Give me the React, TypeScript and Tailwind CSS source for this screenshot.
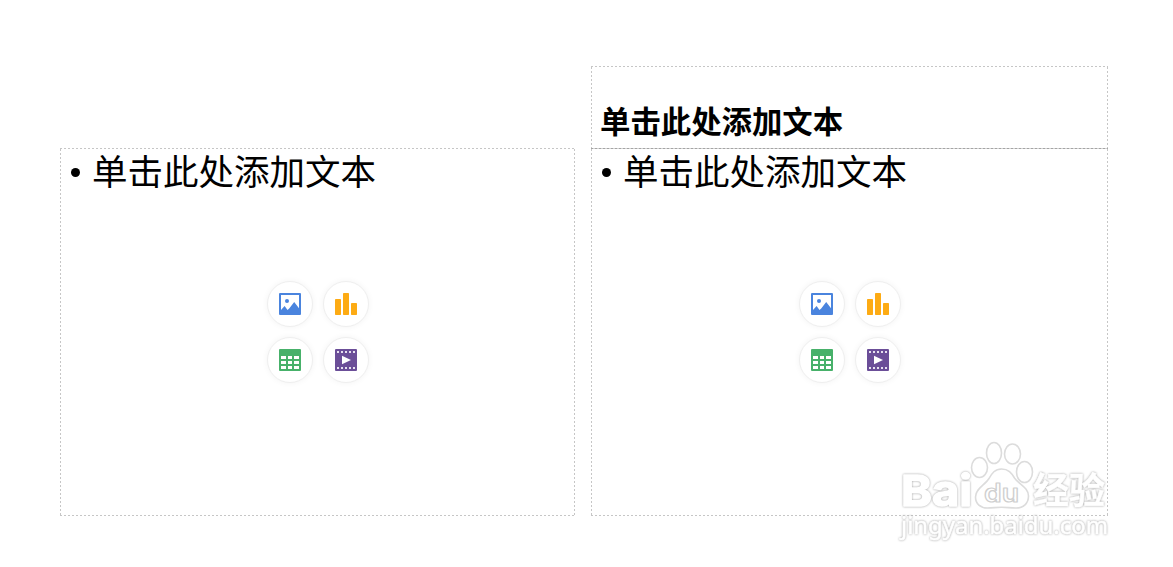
import React from "react";

const DASH_X = "h-px w-full shrink-0 bg-[repeating-linear-gradient(90deg,#c6c6c6_0_2px,transparent_2px_4px)]";
const DASH_X_DARK = "h-px w-full shrink-0 bg-[repeating-linear-gradient(90deg,#a4a4a4_0_2px,#d2d2d2_2px_4px)]";
const DASH_Y = "w-px shrink-0 bg-[repeating-linear-gradient(180deg,#c6c6c6_0_2px,transparent_2px_4px)]";

interface DashedBoxProps {
	className: string;
	darkTop?: boolean;
	children: React.ReactNode;
}

function DashedBox({ className, darkTop, children }: DashedBoxProps) {
	return (
		<div className={`flex flex-col ${className}`}>
			<div className={darkTop ? DASH_X_DARK : DASH_X} />
			<div className="flex min-h-0 flex-1">
				<div className={DASH_Y} />
				<div className="min-w-0 flex-1">{children}</div>
				<div className={DASH_Y} />
			</div>
			<div className={DASH_X} />
		</div>
	);
}

function PictureIcon() {
	return (
		<svg width="22" height="22" viewBox="0 0 22 22">
			<rect width="22" height="22" rx="1" fill="#4a84de" />
			<path d="M2 2h18v13.2L15.2 9l-5 6.4L8.5 17 5.6 13 2 17z" fill="#fff" />
			<circle cx="8" cy="8" r="2" fill="#4a84de" />
		</svg>
	);
}

function ChartIcon() {
	return (
		<svg width="22" height="22" viewBox="0 0 22 22" fill="#fdab14">
			<rect x="0" y="6" width="6" height="16" rx="0.7" />
			<rect x="8" y="0" width="6" height="22" rx="0.7" />
			<rect x="16" y="10" width="6" height="12" rx="0.7" />
		</svg>
	);
}

function TableIcon() {
	return (
		<svg width="22" height="22" viewBox="0 0 22 22">
			<rect width="22" height="22" rx="1" fill="#47b16a" />
			<path
				d="M2 7h5v3H2zM9 7h4v3H9zM15 7h5v3h-5zM2 12h5v3H2zM9 12h4v3H9zM15 12h5v3h-5zM2 17h5v3H2zM9 17h4v3H9zM15 17h5v3h-5z"
				fill="#fff"
			/>
		</svg>
	);
}

function VideoIcon() {
	return (
		<svg width="22" height="22" viewBox="0 0 22 22">
			<rect width="22" height="22" rx="1" fill="#6b4e98" />
			<path d="M2 3h18M2 19h18" stroke="#e6e0ef" strokeWidth="2" strokeDasharray="2 2" />
			<path d="M7 6.7v8.6l9-4.3z" fill="#fff" />
		</svg>
	);
}

function RoundButton({ children }: { children: React.ReactNode }) {
	return (
		<button className="flex size-[46px] items-center justify-center rounded-full border border-[#efefef] bg-white shadow-[0_0_6px_rgba(0,0,0,0.05)]">
			{children}
		</button>
	);
}

function ContentPlaceholder() {
	return (
		<div className="flex flex-col">
			<div className="flex h-[50px] items-start pl-[10px] text-[35.5px] leading-none">
				<span className="mr-[12px] mt-[18.5px] size-[9px] rounded-full bg-black" />
				<span className="mt-[3px]">单击此处添加文本</span>
			</div>
			<div className="mx-auto mt-[82px] grid w-[102px] grid-cols-2 gap-[10px]">
				<RoundButton><PictureIcon /></RoundButton>
				<RoundButton><ChartIcon /></RoundButton>
				<RoundButton><TableIcon /></RoundButton>
				<RoundButton><VideoIcon /></RoundButton>
			</div>
		</div>
	);
}

function Watermark() {
	return (
		<svg
			className="absolute left-[895px] top-[435px]"
			width="222"
			height="112"
			viewBox="0 0 222 112"
			fill="#fff"
			stroke="#fff"
			strokeLinejoin="round"
		>
			<g className="[filter:drop-shadow(0_0_1px_#a0a0a0)]">
				<text x="6" y="71" fontSize="43" fontWeight="700" fontFamily="Inter, sans-serif" textLength="71" lengthAdjust="spacingAndGlyphs" strokeWidth="1.6">Bai</text>
				<text x="138" y="68.5" fontSize="36" fontWeight="700" textLength="72" fontFamily="'Noto Sans CJK SC', sans-serif" strokeWidth="0.5">经验</text>
				<text x="6" y="99" fontSize="24" textLength="207" lengthAdjust="spacingAndGlyphs" fontFamily="'Noto Sans', sans-serif" strokeWidth="0.6">jingyan.baidu.com</text>
			</g>
			<g stroke="#dcdcdc" strokeWidth="1.6">
				<ellipse cx="84.5" cy="32.5" rx="8" ry="10" />
				<ellipse cx="99" cy="18" rx="7.5" ry="10.5" />
				<ellipse cx="117.5" cy="19" rx="8" ry="10" />
				<ellipse cx="129.5" cy="37" rx="8" ry="10.5" />
				<path d="M106.500 34c-7 0-9.500 4.500-12.500 9.500-4 6.500-13.500 10-13.500 18.500 0 7 5 11 12 11 5 0 9-.7 14-.7s9 .7 14 .7c8 0 13-4.500 13-12 0-8.500-9.500-11.500-14-18-3-5-6-9-13-9z" />
			</g>
			<text x="89" y="67" fontSize="25" textLength="35" lengthAdjust="spacingAndGlyphs" fontWeight="600" fontFamily="Inter, sans-serif" stroke="#cfcfcf" strokeWidth="1.2">du</text>
		</svg>
	);
}

export default function App() {
	return (
		<main className="relative flex h-[567px] w-[1173px] items-start gap-4 overflow-hidden bg-white pl-[60px] pt-[66px] font-['Noto_Sans_CJK_SC',sans-serif] text-black">
			<DashedBox className="mt-[82px] h-[368px] w-[515px]">
				<ContentPlaceholder />
			</DashedBox>
			<div className="flex w-[517px] flex-col">
				<DashedBox className="h-[83px] w-full">
					<h2 className="flex h-full items-end pb-[13px] pl-[8px] text-[30.4px] font-bold leading-none">单击此处添加文本</h2>
				</DashedBox>
				<DashedBox className="-mt-px h-[368px] w-full" darkTop>
					<ContentPlaceholder />
				</DashedBox>
			</div>
			<Watermark />
		</main>
	);
}
